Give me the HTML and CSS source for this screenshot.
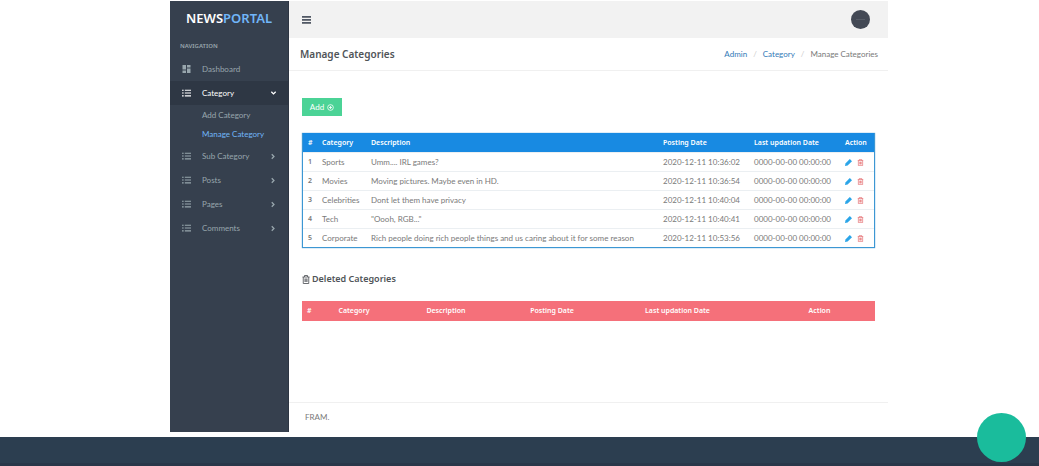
FILE: index.html
```html
<!DOCTYPE html>
<html lang="en">
<head>
<meta charset="utf-8">
<title>Manage Categories</title>
<link rel="stylesheet" href="styles.css">
</head>
<body>
<svg class="sprite" aria-hidden="true">
  <symbol id="list" viewBox="0 0 16 14"><path d="M0 1h3v2H0zM5 1h11v2H5zM0 6h3v2H0zM5 6h11v2H5zM0 11h3v2H0zM5 11h11v2H5z"/></symbol>
  <symbol id="dash" viewBox="0 0 16 16"><path d="M0 0h7v9H0zM9 0h7v5H9zM0 11h7v5H0zM9 7h7v9H9z"/></symbol>
  <symbol id="chev" viewBox="0 0 8 8"><path d="M2 1.500l2.500 2.500L2 6.500" fill="none" stroke="currentColor" stroke-width="1.500"/></symbol>
  <symbol id="pencil" viewBox="0 0 16 16"><path d="M0 16l1-6L11 0l5 5L6 15z"/></symbol>
  <symbol id="trash" viewBox="0 0 16 18"><path d="M1 4h14M5 4V1h6v3M2.500 4v13h11V4M6 7v7M8 7v7M10 7v7" fill="none" stroke="currentColor" stroke-width="1.700"/></symbol>
  <symbol id="plus" viewBox="0 0 16 16"><g fill="none" stroke="currentColor" stroke-width="1.800"><circle cx="8" cy="8" r="6.500"/><path d="M8 4.500v7M4.500 8h7"/></g></symbol>
</svg>
<div class="app">
  <aside class="sidebar">
    <a class="logo" href="#">NEWS<span>PORTAL</span></a>
    <p class="nav-title">NAVIGATION</p>
    <nav class="nav">
      <a class="item" href="#"><svg class="nav-icon dash"><use href="#dash"/></svg><span>Dashboard</span></a>
      <a class="item active" href="#"><svg class="nav-icon"><use href="#list"/></svg><span>Category</span><svg class="chev down"><use href="#chev"/></svg></a>
      <div class="subnav">
        <a href="#">Add Category</a>
        <a class="current" href="#">Manage Category</a>
      </div>
      <a class="item" href="#"><svg class="nav-icon"><use href="#list"/></svg><span>Sub Category</span><svg class="chev"><use href="#chev"/></svg></a>
      <a class="item" href="#"><svg class="nav-icon"><use href="#list"/></svg><span>Posts</span><svg class="chev"><use href="#chev"/></svg></a>
      <a class="item" href="#"><svg class="nav-icon"><use href="#list"/></svg><span>Pages</span><svg class="chev"><use href="#chev"/></svg></a>
      <a class="item" href="#"><svg class="nav-icon"><use href="#list"/></svg><span>Comments</span><svg class="chev"><use href="#chev"/></svg></a>
    </nav>
  </aside>
  <div class="main">
    <header class="topbar">
      <button class="menu" aria-label="Toggle menu"><i></i><i></i><i></i></button>
      <button class="avatar" aria-label="Account"><i></i></button>
    </header>
    <div class="title-bar">
      <h1>Manage Categories</h1>
      <nav class="crumbs"><a href="#">Admin</a><i>/</i><a href="#">Category</a><i>/</i><span>Manage Categories</span></nav>
    </div>
    <main class="content">
      <button class="add">Add <svg><use href="#plus"/></svg></button>
      <table class="categories">
        <colgroup><col class="c-num"><col class="c-cat"><col><col class="c-date"><col class="c-date"><col class="c-act"></colgroup>
        <thead><tr><th>#</th><th>Category</th><th>Description</th><th>Posting Date</th><th>Last updation Date</th><th>Action</th></tr></thead>
        <tbody>
          <tr><th>1</th><td>Sports</td><td>Umm.... IRL games?</td><td>2020-12-11 10:36:02</td><td>0000-00-00 00:00:00</td><td><div class="actions"><a class="edit" href="#" aria-label="Edit"><svg><use href="#pencil"/></svg></a><a class="delete" href="#" aria-label="Delete"><svg><use href="#trash"/></svg></a></div></td></tr>
          <tr><th>2</th><td>Movies</td><td>Moving pictures. Maybe even in HD.</td><td>2020-12-11 10:36:54</td><td>0000-00-00 00:00:00</td><td><div class="actions"><a class="edit" href="#" aria-label="Edit"><svg><use href="#pencil"/></svg></a><a class="delete" href="#" aria-label="Delete"><svg><use href="#trash"/></svg></a></div></td></tr>
          <tr><th>3</th><td>Celebrities</td><td>Dont let them have privacy</td><td>2020-12-11 10:40:04</td><td>0000-00-00 00:00:00</td><td><div class="actions"><a class="edit" href="#" aria-label="Edit"><svg><use href="#pencil"/></svg></a><a class="delete" href="#" aria-label="Delete"><svg><use href="#trash"/></svg></a></div></td></tr>
          <tr><th>4</th><td>Tech</td><td>"Oooh, RGB..."</td><td>2020-12-11 10:40:41</td><td>0000-00-00 00:00:00</td><td><div class="actions"><a class="edit" href="#" aria-label="Edit"><svg><use href="#pencil"/></svg></a><a class="delete" href="#" aria-label="Delete"><svg><use href="#trash"/></svg></a></div></td></tr>
          <tr><th>5</th><td>Corporate</td><td>Rich people doing rich people things and us caring about it for some reason</td><td>2020-12-11 10:53:56</td><td>0000-00-00 00:00:00</td><td><div class="actions"><a class="edit" href="#" aria-label="Edit"><svg><use href="#pencil"/></svg></a><a class="delete" href="#" aria-label="Delete"><svg><use href="#trash"/></svg></a></div></td></tr>
        </tbody>
      </table>
      <h2><svg><use href="#trash"/></svg>Deleted Categories</h2>
      <table class="deleted">
        <colgroup><col class="d-num"><col class="d-cat"><col class="d-desc"><col class="d-post"><col class="d-upd"><col class="d-act"></colgroup>
        <thead><tr><th>#</th><th>Category</th><th>Description</th><th>Posting Date</th><th>Last updation Date</th><th>Action</th></tr></thead>
      </table>
    </main>
    <footer class="credit">FRAM.</footer>
  </div>
</div>
<footer class="page-footer"><button class="fab" aria-label="Open"></button></footer>
</body>
</html>
```
FILE: styles.css
```css
* { box-sizing: border-box; }
body {
  margin: 0;
  min-height: 100vh;
  display: flex;
  flex-direction: column;
  background: #fff;
  color: #797979;
  font: 8px/12px Lato, sans-serif;
}
a { color: inherit; text-decoration: none; }
button { border: 0; padding: 0; font: inherit; color: inherit; cursor: pointer; }
svg { display: block; fill: currentColor; flex: none; }
i { font-style: normal; }
h1, h2 { margin: 0; color: #505458; font-family: "Noto Sans", sans-serif; font-size: 10px; line-height: 16px; font-weight: 600; }
.sprite { display: none; }

.app { flex: 1; display: flex; margin: 1px 151px 5px 170px; }
.sidebar { width: 119px; flex: none; background: #36404e; color: #98a6ad; border-right: 1px solid #2d3542; }
.logo { display: block; height: 35px; line-height: 35px; text-align: center; color: #fff; font-family: "Noto Sans", sans-serif; font-size: 13px; font-weight: 600; }
.logo span { color: #71b6f9; }
.nav-title { margin: 0; padding: 4px 10px 5px; font-family: "Noto Sans", sans-serif; font-size: 6px; line-height: 12px; font-weight: 600; }
.nav { display: flex; flex-direction: column; }
.item { display: flex; align-items: center; height: 24px; padding: 0 11px 0 12px; }
.item span { flex: 1; }
.item.active { background: #2e3744; color: #fff; }
.nav-icon { width: 9px; height: 8px; margin-right: 11px; }
.chev { width: 7px; height: 7px; }
.down { transform: rotate(90deg); }
.subnav { display: flex; flex-direction: column; padding: 1px 0 0 32px; }
.subnav a { line-height: 19px; }
.subnav .current { color: #71b6f9; }

.main { flex: 1; min-width: 0; display: flex; flex-direction: column; }
.topbar { display: flex; align-items: center; justify-content: space-between; height: 37px; padding: 0 18px 0 13px; background: #f2f2f2; }
.menu { display: grid; gap: 1px; width: 9px; background: none; }
.menu i { height: 2px; background: #777b82; border-top: 1px solid #505866; }
.avatar { display: grid; place-items: center; width: 19px; height: 19px; border-radius: 50%; background: #434955; }
.avatar i { width: 9px; height: 1px; background: #555b66; }
.title-bar { display: flex; align-items: center; justify-content: space-between; height: 33px; padding: 0 10px 0 11px; border-bottom: 1px solid #f0f0f0; }
.crumbs { display: flex; gap: 6px; }
.crumbs a { color: #337ab7; }
.crumbs i { color: #ccc; }
.content { flex: 1; padding: 27px 13px 0; }
.add { display: flex; align-items: center; justify-content: center; gap: 3px; width: 40px; height: 18px; margin-bottom: 17px; background: #4bd396; color: #fff; }
.add svg { width: 7px; height: 7px; }

table { width: 100%; table-layout: fixed; border-collapse: separate; border-spacing: 0; }
th, td { height: 19px; padding: 0 0 0 5px; text-align: left; white-space: nowrap; }
th { font-family: "Noto Sans", sans-serif; font-weight: 600; font-size: 7px; }
.categories { border: 1px solid #3c97d3; border-width: 0 1px 1px; box-shadow: 0 0 1px #3c97d3; }
.categories thead th { background: #188ae2; color: #fff; }
.categories tbody th { border-top: 1px solid #ebeff2; }
.categories td { border-top: 1px solid #ebeff2; }
.c-num { width: 14px; }
.c-cat { width: 49px; }
.c-date { width: 91px; }
.c-act { width: 34px; }
.actions { display: flex; align-items: center; gap: 5px; }
.actions svg { width: 7px; height: 7px; }
.edit { color: #2ba5e8; }
.delete { color: #e4686c; }

h2 { display: flex; align-items: center; gap: 2px; margin: 23px 0 14px; font-size: 9px; }
h2 svg { width: 8px; height: 9px; }
.deleted th { height: 20px; padding: 0; background: #f5707a; color: #fff; text-align: center; }
.deleted th:first-child { padding-left: 5px; text-align: left; }
.d-num { width: 27px; }
.d-cat { width: 50px; }
.d-desc { width: 134px; }
.d-post { width: 78px; }
.d-upd { width: 173px; }
.d-act { width: 111px; }
.credit { height: 30px; padding: 0 16px; line-height: 29px; border-top: 1px solid #f0f0f0; }

.page-footer { position: relative; height: 29px; background: #2c3e50; border-bottom: 3px solid #293749; }
.fab { position: absolute; right: 13px; bottom: 1px; width: 49px; height: 49px; border-radius: 50%; background: #1abc9c; }
```
